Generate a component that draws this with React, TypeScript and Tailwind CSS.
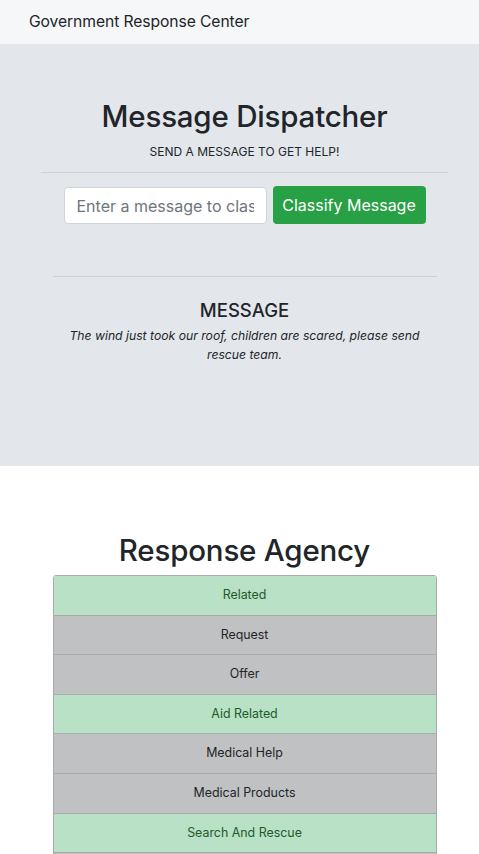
import React from "react";

const categories: { name: string; hit: boolean }[] = [
  { name: "Related", hit: true },
  { name: "Request", hit: false },
  { name: "Offer", hit: false },
  { name: "Aid Related", hit: true },
  { name: "Medical Help", hit: false },
  { name: "Medical Products", hit: false },
  { name: "Search And Rescue", hit: true },
  { name: "Security", hit: false },
  { name: "Military", hit: false },
];

export default function App() {
  return (
    <div className="min-h-screen bg-white text-[#212529] font-['Inter',sans-serif]">
      {/* navbar */}
      <nav className="h-[44px] bg-[#f6f7f9] flex items-center px-[29px]">
        <span className="text-[15.7px] tracking-[-0.1px]">Government Response Center</span>
      </nav>

      {/* jumbotron */}
      <div className="h-[422px] bg-[#e3e7eb] pl-[10px]">
        <div className="pt-[55px] text-center">
          <h1 className="text-[29.5px] leading-[34px] font-medium tracking-[-0.2px]">
            Message Dispatcher
          </h1>
          <p className="mt-[11px] text-[12px] leading-[16px]">SEND A MESSAGE TO GET HELP!</p>
          <div className="mx-[31px] mt-[12px] border-t border-[#cdd1d5]"></div>

          <div className="mt-[14px] flex justify-center gap-[6px]">
            <input
              className="w-[203px] h-[37px] bg-white border border-[#ced4da] rounded-[4px] px-[12px] text-[16px] placeholder:text-[#6c757d] outline-none"
              placeholder="Enter a message to classify"
            />
            <button className="w-[153px] h-[38px] -mt-[1px] bg-[#28a045] text-white text-[16px] rounded-[4px]">
              Classify Message
            </button>
          </div>

          <div className="w-[384px] mx-auto mt-[52px] border-t border-[#cdd1d5]"></div>
          <h4 className="mt-[21px] text-[18.5px] leading-[24px] font-medium">MESSAGE</h4>
          <p className="w-[384px] mx-auto mt-[4px] text-[12.2px] leading-[19px] italic">
            The wind just took our roof, children are scared, please send rescue team.
          </p>
        </div>
      </div>

      {/* results */}
      <div className="pl-[10px] pt-[67px]">
        <h1 className="text-center text-[29.5px] leading-[34px] font-medium tracking-[-0.2px]">
          Response Agency
        </h1>
        <div className="w-[384px] mx-auto mt-[8px] rounded-t-[3px] overflow-hidden border border-[#a9abad]">
          {categories.map((c, i) => (
            <div
              key={c.name}
              className={
                "flex items-center justify-center text-[12.4px] " +
                (i > 0 ? "border-t border-[#a9abad] h-[39.6px] " : "h-[38.6px] ") +
                (c.hit ? "bg-[#b9e1c5] text-[#1d5a2b]" : "bg-[#c0c1c3] text-[#212529]")
              }
            >
              {c.name}
            </div>
          ))}
        </div>
      </div>
    </div>
  );
}
